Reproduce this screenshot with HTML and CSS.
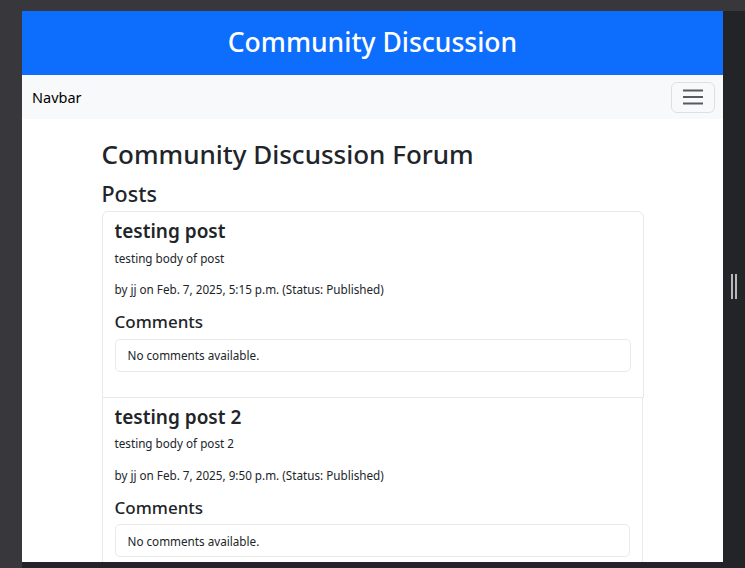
FILE: index.html
```html
<!DOCTYPE html>
<html lang="en">
<head>
<meta charset="utf-8">
<title>Community Discussion</title>
<link rel="stylesheet" href="styles.css">
</head>
<body>
<div class="desk">
  <div class="frame">
    <div class="viewport">
      <header class="site-header">
        <h1 class="site-title">Community Discussion</h1>
      </header>
      <nav class="navbar">
        <a class="brand" href="#">Navbar</a>
        <button class="toggler" type="button" aria-label="Toggle navigation">
          <svg width="22" height="16" viewBox="0 0 22 16" aria-hidden="true">
            <path d="M1 1.5h20M1 8h20M1 14.5h20" stroke="rgba(33,37,41,0.75)" stroke-width="2" fill="none"/>
          </svg>
        </button>
      </nav>
      <main class="container">
        <h2 class="page-title">Community Discussion Forum</h2>
        <h3 class="section-title">Posts</h3>
        <article class="card">
          <h4 class="post-title">testing post</h4>
          <p class="post-body">testing body of post</p>
          <p class="post-meta">by jj on Feb. 7, 2025, 5:15 p.m. (Status: Published)</p>
          <h5 class="comments-title">Comments</h5>
          <div class="comment-box">No comments available.</div>
        </article>
        <article class="card card-next">
          <h4 class="post-title">testing post 2</h4>
          <p class="post-body">testing body of post 2</p>
          <p class="post-meta">by jj on Feb. 7, 2025, 9:50 p.m. (Status: Published)</p>
          <h5 class="comments-title">Comments</h5>
          <div class="comment-box">No comments available.</div>
        </article>
      </main>
    </div>
    <div class="side">
      <span class="handle"></span>
    </div>
  </div>
</div>
</body>
</html>
```

FILE: styles.css
```css
* { box-sizing: border-box; }
html, body {
  margin: 0;
  padding: 0;
  width: 745px;
  height: 568px;
  overflow: hidden;
  background: #38373c;
}
body {
  font-family: "Noto Sans", "Open Sans", sans-serif;
  color: #212529;
}
.desk {
  padding: 11px 0 0 22px;
  height: 568px;
}
.frame {
  display: flex;
  background: #232428;
  height: 557px;
}
.viewport {
  width: 701px;
  height: 551px;
  background: #fff;
  overflow: hidden;
  flex: none;
}
.side {
  flex: 1;
  display: flex;
  justify-content: center;
  padding-top: 263px;
}
.handle {
  width: 6px;
  height: 25px;
  border-left: 2px solid #b8b8bb;
  border-right: 2px solid #b8b8bb;
}
.site-header {
  background: #0d6efd;
  height: 64px;
  display: flex;
  align-items: center;
  justify-content: center;
}
.site-title {
  margin: 0;
  color: #fff;
  font-size: 26.5px;
  font-weight: 500;
  line-height: 1.2;
}
.navbar {
  background: #f8f9fa;
  height: 44px;
  display: flex;
  align-items: center;
  justify-content: space-between;
  padding: 0 8px 0 10px;
}
.brand {
  color: #000;
  text-decoration: none;
  font-size: 14.5px;
}
.toggler {
  width: 44px;
  height: 31px;
  border: 1px solid rgba(0,0,0,0.1);
  border-radius: 6px;
  background: transparent;
  display: flex;
  align-items: center;
  justify-content: center;
  padding: 0;
}
.container {
  width: 542px;
  margin: 0 auto;
  padding-top: 20px;
}
.page-title {
  margin: 0 0 11px;
  font-size: 26px;
  font-weight: 500;
  line-height: 1.2;
}
.section-title {
  margin: 0 0 4px;
  font-size: 21.5px;
  font-weight: 500;
  line-height: 1.2;
}
.card {
  border: 1px solid #e9e9e9;
  border-radius: 6px 6px 0 0;
  padding: 8px 12px 25px;
}
.card-next {
  border-top: none;
  border-radius: 0;
  width: 541px;
}
.post-title {
  margin: 0 0 8px;
  font-size: 19px;
  font-weight: 600;
  line-height: 1.2;
}
.post-body {
  margin: 0 0 16px;
  font-size: 11.7px;
  line-height: 1.3;
}
.post-meta {
  margin: 0 0 15px;
  font-size: 11.7px;
  line-height: 1.3;
}
.comments-title {
  margin: 0 0 6px;
  font-size: 17px;
  font-weight: 500;
  line-height: 1.2;
}
.comment-box {
  border: 1px solid #e9e9e9;
  border-radius: 5px;
  height: 33px;
  padding: 0 12px;
  display: flex;
  align-items: center;
  font-size: 11.7px;
}
```
